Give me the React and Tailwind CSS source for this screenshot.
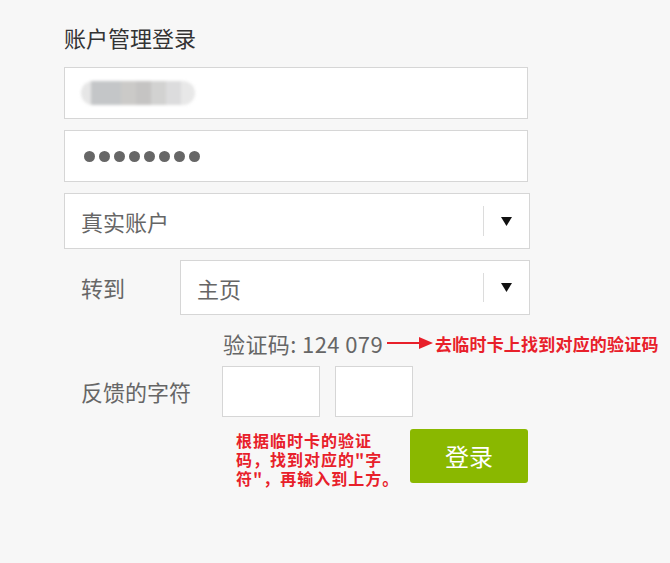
import React from 'react';

function Select({ value, className }) {
  return (
    <div className={`flex items-center bg-white border border-[#d6d6d6] ${className}`}>
      <span className="flex-1 pl-4 text-[22px] leading-none text-[#666]">{value}</span>
      <div className="w-px self-stretch my-3 bg-[#dcdcdc]" />
      <div className="w-[45px] flex justify-center">
        <svg width="11" height="9" viewBox="0 0 11 9">
          <path d="M0 0 H11 L5.5 9 Z" fill="#111" />
        </svg>
      </div>
    </div>
  );
}

export default function App() {
  const dots = Array.from({ length: 8 });
  return (
    <div className="min-h-[563px] bg-[#f7f7f7] pl-16 pt-[24px] font-['Noto_Sans_CJK_SC','Noto_Sans',sans-serif]">
      <h1 className="text-[22px] leading-[26px] text-[#333]">账户管理登录</h1>

      {/* username (blurred) */}
      <div className="mt-[17px] w-[464px] h-[52px] bg-white border border-[#d6d6d6] flex items-center pl-[16px]">
        <div className="flex h-[24px] rounded-full overflow-hidden blur-[1.5px]">
          <div className="w-[10px] bg-[#e6e6e6]" />
          <div className="w-[30px] bg-[#c4c6c8]" />
          <div className="w-[15px] bg-[#cbcac8]" />
          <div className="w-[15px] bg-[#c5c4c3]" />
          <div className="w-[15px] bg-[#d2d2d1]" />
          <div className="w-[15px] bg-[#dcdcdd]" />
          <div className="w-[14px] bg-[#e8e8e8]" />
        </div>
      </div>

      {/* password */}
      <div className="mt-[11px] w-[464px] h-[52px] bg-white border border-[#d6d6d6] flex items-center pl-[19px] gap-[4px]">
        {dots.map((_, i) => (
          <div key={i} className="w-[11px] h-[11px] rounded-full bg-[#666]" />
        ))}
      </div>

      <Select value="真实账户" className="mt-[11px] w-[466px] h-[56px]" />

      <div className="mt-[11px] flex items-center">
        <span className="w-[116px] pl-[17px] text-[22px] text-[#666]">转到</span>
        <Select value="主页" className="w-[350px] h-[55px]" />
      </div>

      <div className="mt-[15px] pl-[159px] flex items-center h-[26px]">
        <span className="text-[22px] leading-none text-[#666] tracking-[0.4px]">验证码: 124 079</span>
        <svg width="48" height="12" viewBox="0 0 48 12" className="ml-[4px]">
          <line x1="0" y1="6" x2="34" y2="6" stroke="#e8202a" strokeWidth="2" />
          <path d="M32 0 L46 6 L32 12 Z" fill="#e8202a" />
        </svg>
        <span className="text-[17px] font-bold text-[#e8202a] leading-none tracking-[0.2px]">去临时卡上找到对应的验证码</span>
      </div>

      <div className="mt-[10px] flex items-center">
        <span className="w-[158px] pl-[17px] text-[22px] text-[#666]">反馈的字符</span>
        <div className="w-[98px] h-[51px] bg-white border border-[#d6d6d6]" />
        <div className="ml-[15px] w-[78px] h-[51px] bg-white border border-[#d6d6d6]" />
      </div>

      <div className="mt-[12px] pl-[172px] flex items-start">
        <p className="w-[174px] text-[16px] leading-[19px] tracking-[1px] font-bold text-[#e8202a] pt-[2px]">
          根据临时卡的验证<br />码，找到对应的"字<br />符"，再输入到上方。
        </p>
        <button className="w-[118px] h-[54px] rounded-[3px] bg-[#8ab800] text-white text-[24px]">登录</button>
      </div>
    </div>
  );
}
